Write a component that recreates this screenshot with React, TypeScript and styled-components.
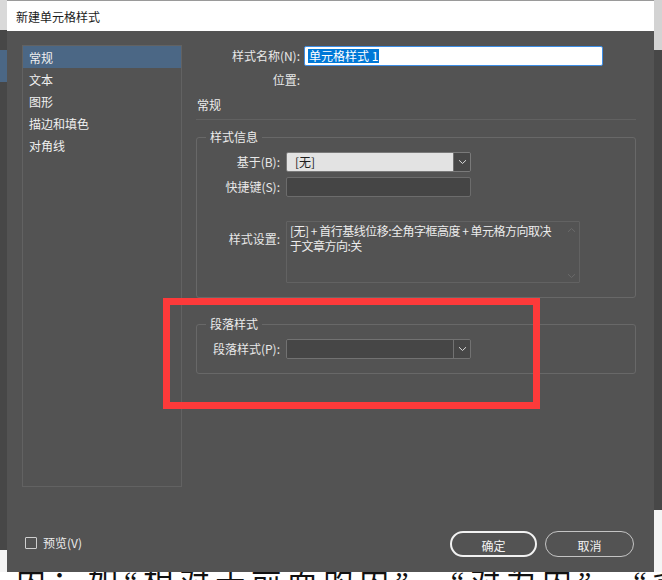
import React from "react";
import styled, { createGlobalStyle } from "styled-components";

const Global = createGlobalStyle`
  html, body { margin: 0; padding: 0; background: #474747; }
  body { font-family: "Noto Sans CJK SC", "Noto Sans", sans-serif; font-size: 12px; }
  * { box-sizing: border-box; }
`;

const Page = styled.div`
  position: relative;
  width: 662px;
  height: 580px;
  overflow: hidden;
  background: #474747;
  padding-left: 7px;
`;

/* fragments of the application window lying behind the dialog */
const BackPiece = styled.div<{ $l: number; $t: number; $w: number; $h: number; $bg: string }>`
  position: absolute;
  left: ${(p) => p.$l}px;
  top: ${(p) => p.$t}px;
  width: ${(p) => p.$w}px;
  height: ${(p) => p.$h}px;
  background: ${(p) => p.$bg};
`;

const BackText = styled.div`
  position: absolute;
  left: 0;
  top: 572px;
  width: 662px;
  height: 8px;
  background: #ffffff;
  overflow: hidden;
`;

const BackLine = styled.div`
  font-family: "Liberation Serif", "Noto Sans CJK SC", serif;
  font-size: 30px;
  line-height: 30px;
  color: #111;
  white-space: nowrap;
  padding-left: 16px;
  margin-top: -5px;
  letter-spacing: 6px;
`;

const Dialog = styled.div`
  position: relative;
  z-index: 1;
  width: 647px;
  height: 572px;
  background: #535353;
  display: flex;
  flex-direction: column;
  color: #e8e8e8;
`;

const TitleBar = styled.div`
  height: 31px;
  flex: none;
  background: #ffffff;
  color: #1b1b1b;
  display: flex;
  align-items: center;
  padding-left: 9px;
  font-size: 12px;
  border-top: 1px solid #9a9a9a;
`;

const Content = styled.div`
  flex: 1;
  display: flex;
  gap: 14px;
  padding: 14px 0 0 15px;
`;

const SideList = styled.div`
  width: 160px;
  height: 442px;
  border: 1px solid #626262;
  display: flex;
  flex-direction: column;
`;

const SideItem = styled.div<{ $active?: boolean }>`
  height: 22px;
  line-height: 23px;
  padding-left: 6px;
  color: #f0f0f0;
  background: ${(p) => (p.$active ? "#4b6785" : "transparent")};
`;

const Main = styled.div`
  width: 440px;
  display: flex;
  flex-direction: column;
`;

const NameRow = styled.div`
  display: grid;
  grid-template-columns: 104px 299px;
  column-gap: 4px;
  align-items: center;
  margin-top: 1px;
`;

const RightLabel = styled.div`
  text-align: right;
  line-height: 14px;
  color: #e8e8e8;
  white-space: nowrap;
`;

const NameInput = styled.div`
  height: 20px;
  border: 1px solid #3d8ee6;
  border-radius: 2px;
  background: #ffffff;
  display: flex;
  align-items: center;
  padding-left: 3px;
`;

const Selected = styled.span`
  background: #0078d7;
  color: #ffffff;
  line-height: 14px;
  padding: 0 1px;
`;

const LocRow = styled(NameRow)`
  margin-top: 7px;
  height: 14px;
`;

const SectionTitle = styled.div`
  margin-top: 10px;
  line-height: 16px;
  padding-left: 1px;
  color: #ececec;
`;

const Separator = styled.div`
  margin-top: 6px;
  height: 1px;
  background: #616161;
`;

const Group = styled.div<{ $mt: number; $pb: number }>`
  margin-top: ${(p) => p.$mt}px;
  border: 1px solid #686868;
  border-radius: 3px;
  padding: 0 0 ${(p) => p.$pb}px 0;
  display: flex;
  flex-direction: column;
`;

const Legend = styled.div`
  align-self: flex-start;
  margin: -9px 0 -7px 9px;
  padding: 0 4px;
  line-height: 16px;
  height: 16px;
  background: #535353;
  color: #ececec;
`;

const FormGrid = styled.div`
  display: grid;
  grid-template-columns: 83px auto;
  column-gap: 6px;
  row-gap: 5px;
  padding-top: 14px;
  align-items: center;
  justify-items: start;
`;

const FormLabel = styled(RightLabel)<{ $top?: boolean; $mt?: number }>`
  justify-self: end;
  align-self: ${(p) => (p.$top ? "start" : "center")};
  margin-top: ${(p) => p.$mt ?? 0}px;
`;

const SelectBox = styled.div<{ $light?: boolean }>`
  width: 185px;
  height: 20px;
  border: 1px solid ${(p) => (p.$light ? "#7a7a7a" : "#727272")};
  border-radius: 2px;
  display: flex;
  overflow: hidden;
`;

const SelectValue = styled.div<{ $light?: boolean }>`
  flex: 1;
  background: ${(p) => (p.$light ? "#e3e3e3" : "#464646")};
  color: #1d1d1d;
  padding-left: 8px;
  line-height: 18px;
`;

const SelectArrow = styled.div`
  width: 17px;
  background: #474747;
  border-left: 1px solid #727272;
  display: flex;
  align-items: center;
  justify-content: center;
`;

const TextInput = styled.div`
  width: 185px;
  height: 20px;
  border: 1px solid #6c6c6c;
  border-radius: 2px;
  background: #454545;
`;

const TextArea = styled.div`
  width: 294px;
  height: 62px;
  margin-top: 19px;
  border: 1px solid #626262;
  border-radius: 1px;
  padding: 2px 3px 3px 3px;
  display: flex;
  justify-content: space-between;
`;

const AreaText = styled.div`
  line-height: 14.5px;
  color: #ececec;
  font-size: 12px;
  letter-spacing: -0.5px;
  white-space: nowrap;
`;

const ScrollTrack = styled.div`
  width: 9px;
  padding-top: 3px;
  display: flex;
  flex-direction: column;
  justify-content: space-between;
`;

const Footer = styled.div`
  flex: none;
  display: flex;
  align-items: center;
  padding: 0 20px 15px 18px;
  height: 41px;
`;

const CheckRow = styled.label`
  display: flex;
  align-items: center;
  gap: 6px;
  color: #ececec;
  margin-top: -3px;
`;

const CheckBox = styled.span`
  width: 12px;
  height: 12px;
  border: 1px solid #cfcfcf;
  border-radius: 1px;
`;

const Buttons = styled.div`
  margin-left: auto;
  display: flex;
  gap: 8px;
`;

const PillButton = styled.button<{ $primary?: boolean; $w: number }>`
  width: ${(p) => p.$w}px;
  height: 26px;
  border-radius: 13px;
  border: ${(p) => (p.$primary ? "2px solid #f2f2f2" : "1px solid #c4c4c4")};
  background: transparent;
  color: #f2f2f2;
  font-family: inherit;
  font-size: 12px;
  padding: 0;
  padding-top: 2px;
`;

const Annotation = styled.div`
  position: absolute;
  left: 156px;
  top: 298px;
  width: 377px;
  height: 111px;
  border: 7px solid #fd3a3a;
  pointer-events: none;
`;

const Chevron = () => (
  <svg width="9" height="6" viewBox="0 0 9 6">
    <path d="M1 1.2 L4.5 4.5 L8 1.2" fill="none" stroke="#d8d8d8" strokeWidth="1" />
  </svg>
);

const FaintChevron = ({ up }: { up?: boolean }) => (
  <svg width="9" height="6" viewBox="0 0 9 6">
    <path
      d={up ? "M1 4.8 L4.5 1.5 L8 4.8" : "M1 1.2 L4.5 4.5 L8 1.2"}
      fill="none"
      stroke="#6a6a6a"
      strokeWidth="1"
    />
  </svg>
);

export default function App() {
  return (
    <Page>
      <Global />
      <BackPiece $l={0} $t={0} $w={7} $h={30} $bg="#d9d9d9" />
      <BackPiece $l={0} $t={50} $w={7} $h={32} $bg="#4b6785" />
      <BackPiece $l={654} $t={0} $w={8} $h={50} $bg="#d3d3d3" />
      <BackPiece $l={0} $t={550} $w={7} $h={30} $bg="#f4f4f4" />
      <BackPiece $l={654} $t={510} $w={8} $h={70} $bg="#f4f4f4" />
      <BackText>
        <BackLine>内；如“相对于前面的内”、“对为内”、“背</BackLine>
      </BackText>
      <Dialog>
        <TitleBar>新建单元格样式</TitleBar>
        <Content>
          <SideList>
            <SideItem $active>常规</SideItem>
            <SideItem>文本</SideItem>
            <SideItem>图形</SideItem>
            <SideItem>描边和填色</SideItem>
            <SideItem>对角线</SideItem>
          </SideList>
          <Main>
            <NameRow>
              <RightLabel>样式名称(N):</RightLabel>
              <NameInput>
                <Selected>单元格样式 1</Selected>
              </NameInput>
            </NameRow>
            <LocRow>
              <RightLabel>位置:</RightLabel>
              <span />
            </LocRow>
            <SectionTitle>常规</SectionTitle>
            <Separator />
            <Group $mt={17} $pb={14}>
              <Legend>样式信息</Legend>
              <FormGrid>
                <FormLabel>基于(B):</FormLabel>
                <SelectBox $light>
                  <SelectValue $light>[无]</SelectValue>
                  <SelectArrow>
                    <Chevron />
                  </SelectArrow>
                </SelectBox>
                <FormLabel>快捷键(S):</FormLabel>
                <TextInput />
                <FormLabel $top $mt={30}>样式设置:</FormLabel>
                <TextArea>
                  <AreaText>
                    [无] + 首行基线位移:全角字框高度 + 单元格方向取决
                    <br />
                    于文章方向:关
                  </AreaText>
                  <ScrollTrack>
                    <FaintChevron up />
                    <FaintChevron />
                  </ScrollTrack>
                </TextArea>
              </FormGrid>
            </Group>
            <Group $mt={26} $pb={14}>
              <Legend>段落样式</Legend>
              <FormGrid>
                <FormLabel>段落样式(P):</FormLabel>
                <SelectBox>
                  <SelectValue />
                  <SelectArrow>
                    <Chevron />
                  </SelectArrow>
                </SelectBox>
              </FormGrid>
            </Group>
          </Main>
        </Content>
        <Footer>
          <CheckRow>
            <CheckBox />
            预览(V)
          </CheckRow>
          <Buttons>
            <PillButton $primary $w={87}>确定</PillButton>
            <PillButton $w={89}>取消</PillButton>
          </Buttons>
        </Footer>
        <Annotation />
      </Dialog>
    </Page>
  );
}
